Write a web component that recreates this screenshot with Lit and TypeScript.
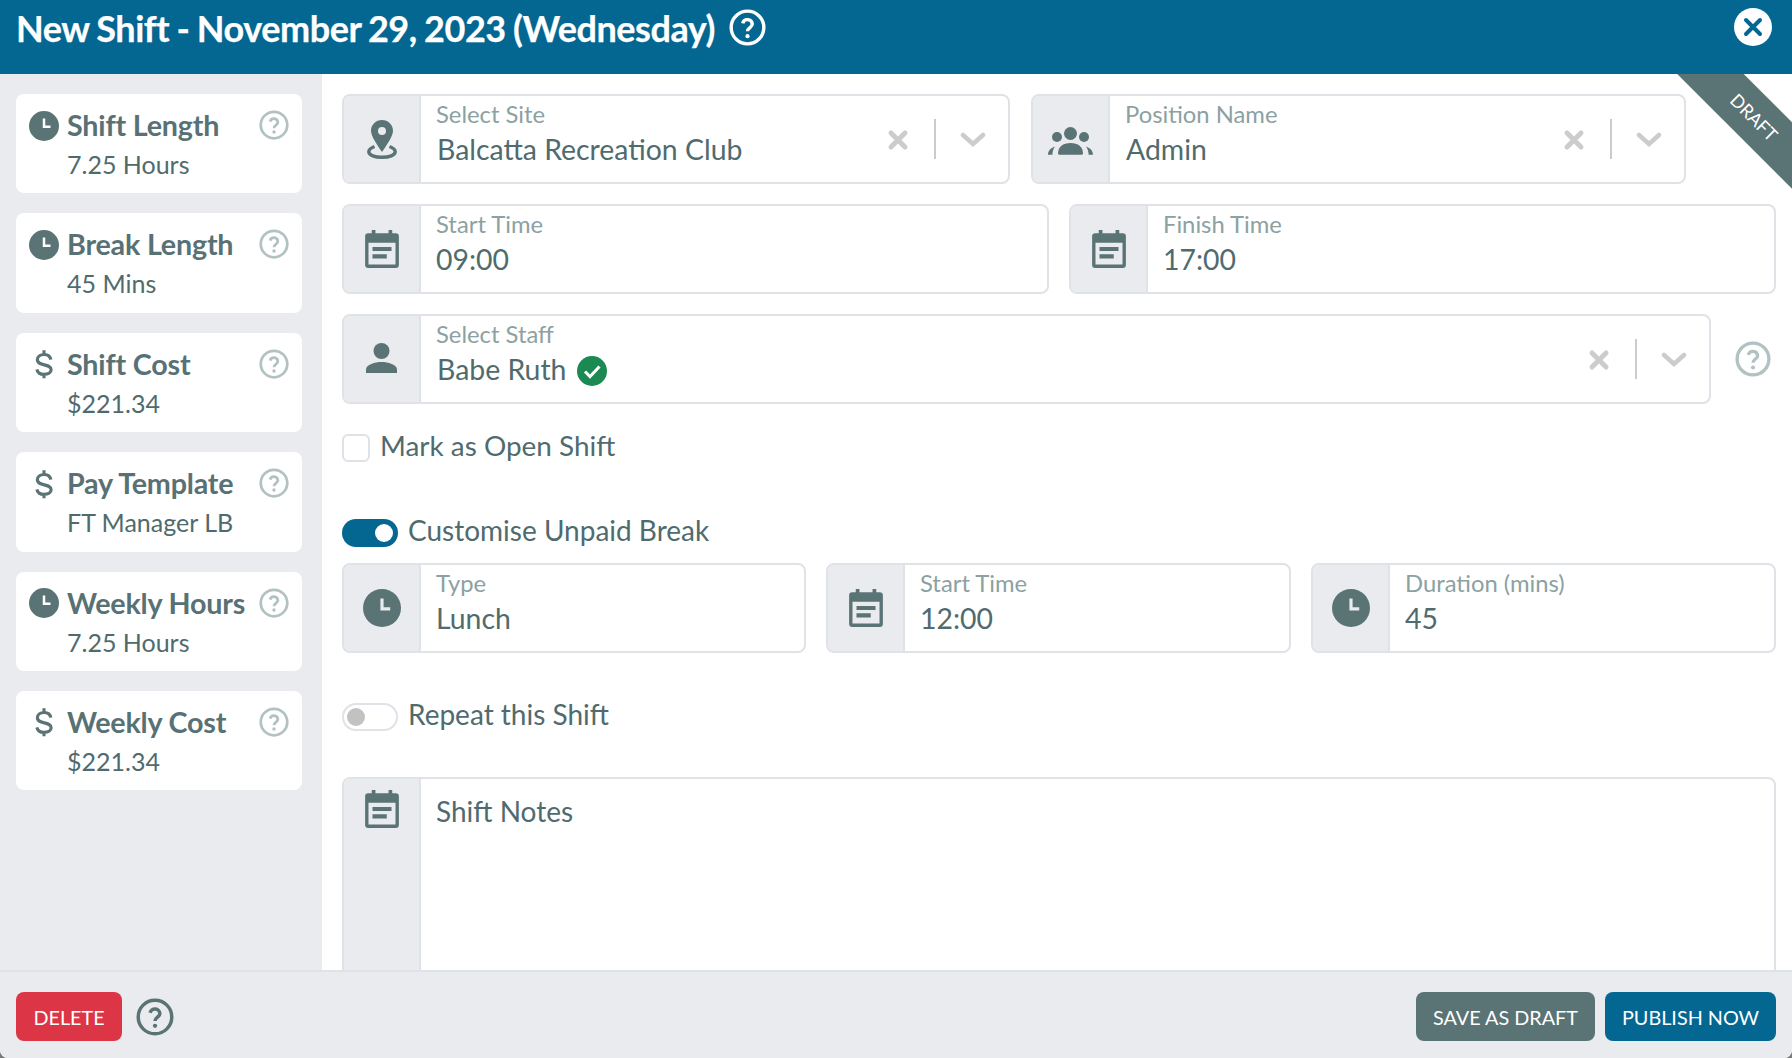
import { LitElement, html, css, svg } from "lit";
import { customElement } from "lit/decorators.js";

const help = svg`<circle cx="12" cy="12" r="10.6" fill="none" stroke="currentColor" stroke-width="2.2"/><path d="M8.900 9.300a3.150 3.150 0 0 1 6.200.5c0 2.200-3.100 2.300-3.100 4.700" fill="none" stroke="currentColor" stroke-width="2.200"/><circle cx="12" cy="17.600" r="1.350" fill="currentColor"/>`;
const clock = svg`<circle cx="12" cy="12" r="12" fill="currentColor"/><path d="M12 6v6.600h5.200" fill="none" stroke="#fff" stroke-width="2"/>`;
const clockAddon = svg`<circle cx="12" cy="12" r="12" fill="currentColor"/><path d="M12 6v6.600h5.200" fill="none" stroke="#e9ebef" stroke-width="2"/>`;
const dollar = svg`<path d="M17.400 8.500C17 5.800 14.900 4.400 12 4.400 9 4.400 6.700 6 6.700 8.600c0 5.600 11 2.600 11 8 0 2.300-2.400 3.700-5.700 3.700-3 0-5.200-1.400-5.700-4M12 1v3.400M12 20v3.400" fill="none" stroke="currentColor" stroke-width="2.500"/>`;
const calendar = svg`<path fill-rule="evenodd" fill="currentColor" d="M6.300 0h3.500v3h12.400V0h3.500v3H29a3 3 0 0 1 3 3v27a3 3 0 0 1-3 3H3a3 3 0 0 1-3-3V6a3 3 0 0 1 3-3h3.300zM3.200 12V32.700h25.600V12z"/><path fill="currentColor" d="M7 16h18v4H7zM7 23h13.500v4H7z"/>`;
const pin = svg`<path fill-rule="evenodd" fill="currentColor" d="M15 0c6.200 0 11 4.800 11 10.800 0 5.600-6.500 14.600-11 21.200C10.500 25.400 4 16.400 4 10.800 4 4.800 8.800 0 15 0zm0 7a4 4 0 1 0 0 8 4 4 0 0 0 0-8z"/><path fill="none" stroke="currentColor" stroke-width="3.400" d="M7.500 26.500C3.500 28 1.800 29.500 1.800 31.800c0 3.400 6 5.500 13.200 5.500s13.200-2.100 13.200-5.500c0-2.300-1.700-3.800-5.700-5.300"/>`;
const users = svg`<g fill="currentColor"><circle cx="22.500" cy="6.500" r="6.500"/><circle cx="9" cy="10" r="5"/><circle cx="36" cy="10" r="5"/><path d="M10 26.500c0-6.500 5-10.500 12.500-10.500S35 20 35 26.500c0 .7-.4 1.200-1.200 1.200H11.200c-.8 0-1.200-.5-1.200-1.200z"/><path d="M0 27.700c0-3.600 2.500-6.700 7-8.200-1.600 2.200-2.600 5-2.600 8.200zM45 27.700c0-3.600-2.500-6.700-7-8.200 1.600 2.200 2.600 5 2.600 8.200z"/></g>`;
const person = svg`<g fill="currentColor"><circle cx="15.500" cy="8" r="8"/><path d="M0 30v-3.500C0 21.500 9 19 15.500 19S31 21.500 31 26.500V30z"/></g>`;

function ic(cls: string, vb: string, body: unknown) {
  return html`<svg class=${cls} viewBox=${vb} aria-hidden="true">${body}</svg>`;
}

@customElement("app-root")
export class AppRoot extends LitElement {
  static styles = css`
    :host {
      display: block;
      width: 1792px;
      height: 1058px;
      background: #7a7a7a;
      font-family: Lato, "Liberation Sans", sans-serif;
      color: #506b6e;
    }
    * { box-sizing: border-box; }
    .modal {
      height: 1058px;
      display: flex;
      flex-direction: column;
      background: #fff;
      border-radius: 0 0 8px 8px;
      overflow: hidden;
    }
    .head {
      height: 74px;
      flex: none;
      background: #036792;
      color: #fff;
      display: flex;
      align-items: flex-start;
      padding: 7px 20px 0 16px;
    }
    .head h1 {
      margin: 0;
      font-size: 36px;
      line-height: 42px;
      font-weight: 700;
      letter-spacing: -0.45px;
      word-spacing: -1px;
      -webkit-text-stroke: 0.25px #fff;
      white-space: nowrap;
    }
    .head .hq { width: 37px; height: 37px; margin: 2px 0 0 14px; color: #fff; }
    .close {
      margin-left: auto;
      margin-top: 1px;
      width: 38px;
      height: 38px;
    }
    .body { flex: 1; min-height: 0; display: flex; }
    .side {
      width: 322px;
      flex: none;
      background: #e9ebef;
      padding: 20px 20px 0 16px;
      display: flex;
      flex-direction: column;
      gap: 20px;
    }
    .card {
      height: 99.400px;
      background: #fff;
      border-radius: 8px;
      display: grid;
      grid-template-columns: 38px 1fr 30px;
      grid-template-rows: 39px auto;
      padding: 12px 13px 0 13px;
    }
    .card .ci { width: 30px; height: 30px; align-self: center; color: #5a7374; }
    .card .ci.d { height: 32px; width: 30px; }
    .card b { font-size: 28.700px; font-weight: 700; line-height: 39px; letter-spacing: -0.2px; white-space: nowrap; color: #587175; }
    .card .q { width: 30px; height: 30px; color: #b2c1c1; align-self: center; margin-top: -1px; }
    .card span { grid-column: 2 / 4; font-size: 25px; line-height: 38px; white-space: nowrap; }
    .main {
      flex: 1;
      min-width: 0;
      position: relative;
      overflow: hidden;
      padding: 20px 16px 0 20px;
    }
    .row { display: grid; gap: 20px; margin-bottom: 20px; }
    .r1 { grid-template-columns: 668px 655px; column-gap: 21px; }
    .r2 { grid-template-columns: 707px 707px; column-gap: 20px; }
    .r3 { grid-template-columns: 1369px 65px; gap: 0; margin-bottom: 30px; }
    .r4 { grid-template-columns: 464px 465px 465px; margin-bottom: 50px; }
    .field {
      height: 90px;
      border: 2px solid #dfe2e6;
      border-radius: 8px;
      display: flex;
      overflow: hidden;
      background: #fff;
    }
    .addon {
      width: 77px;
      flex: none;
      background: #e9ebef;
      border-right: 2px solid #dfe2e6;
      display: flex;
      align-items: center;
      justify-content: center;
      color: #5a7374;
    }
    .addon .cal { width: 34px; height: 38px; margin-top: -1px; }
    .addon .pin { width: 30px; height: 39px; }
    .addon .users { width: 45px; height: 28px; margin-top: 4px; }
    .addon .person { width: 31px; height: 30px; margin-top: -2px; }
    .addon .clk { width: 38px; height: 38px; }
    .txt { flex: 1; min-width: 0; padding: 2px 0 0 15px; }
    .lab { font-size: 23.800px; line-height: 32px; color: #8ca1a2; white-space: nowrap; }
    .val { font-size: 28.400px; line-height: 38px; white-space: nowrap; display: flex; align-items: center; }
    .val.sel { margin-left: 1px; }
    .val .ok { width: 30px; height: 30px; margin-left: 11px; margin-top: 3px; }
    .ctl { flex: none; display: flex; align-items: center; color: #ccc; padding: 2px 22px 0 0; }
    .ctl .x { width: 22px; height: 22px; margin-right: 25px; }
    .ctl i { display: block; width: 2px; height: 40px; background: #ccc; margin-right: 24px; margin-top: -2px; }
    .ctl .ch { width: 26px; height: 16px; }
    .sq { width: 36px; height: 36px; color: #b2c1c1; align-self: center; justify-self: end; margin-right: 5px; }
    .check { display: flex; align-items: center; height: 28px; margin-bottom: 57px; font-size: 27.900px; white-space: nowrap; }
    .label { display: block; position: relative; top: -3px; }
    .box { width: 28px; height: 28px; border: 2px solid #dfe2e6; border-radius: 6px; margin-right: 10px; background: #fff; }
    .tg { display: flex; align-items: center; height: 28px; font-size: 28px; white-space: nowrap; }
    .tg.on { margin-bottom: 16px; }
    .tg.off { margin-bottom: 46px; }
    .sw { width: 56px; height: 28px; border-radius: 14px; margin-right: 10px; display: flex; align-items: center; flex: none; }
    .on .sw { background: #036792; justify-content: flex-end; padding-right: 5px; }
    .on .sw u { display: block; width: 18px; height: 18px; border-radius: 50%; background: #fff; }
    .off .sw { background: #fff; border: 2px solid #dfe2e6; padding-left: 3px; }
    .off .sw u { display: block; width: 18px; height: 18px; border-radius: 50%; background: #c2c2c2; }
    .notes { height: 260px; align-items: stretch; }
    .notes .addon { align-items: flex-start; padding-top: 12px; }
    .notes .txt { padding-top: 13px; font-size: 28px; line-height: 38px; }
    .ribbon {
      position: absolute;
      top: 19.700px;
      right: -92px;
      width: 260px;
      height: 46.700px;
      background: #5a7374;
      color: #fff;
      transform: rotate(45deg);
      display: flex;
      align-items: center;
      justify-content: center;
      font-size: 18px;
      text-transform: uppercase;
    }
    .foot {
      height: 88px;
      flex: none;
      background: #e9ebef;
      border-top: 2px solid #dfe2e6;
      display: flex;
      align-items: center;
      padding: 3px 16px 0;
    }
    .btn {
      height: 49px;
      border: 0;
      border-radius: 8px;
      color: #fff;
      font-family: inherit;
      font-size: 19.800px;
      padding: 0;
      text-transform: uppercase;
      display: flex;
      align-items: center;
      justify-content: center;
    }
    .del { width: 106px; background: #dc3545; }
    .draft { width: 179px; background: #5a7374; margin-left: auto; margin-right: 10px; }
    .pub { width: 171px; background: #036792; }
    .fq { width: 38px; height: 38px; color: #5a7374; margin-left: 14px; }
  `;

  private card(title: string, sub: string, kind: "clock" | "dollar") {
    return html`<div class="card">
      ${kind === "clock"
        ? ic("ci", "0 0 24 24", clock)
        : ic("ci d", "0 0 24 24", dollar)}
      <b>${title}</b>
      ${ic("q", "0 0 24 24", help)}
      <span>${sub}</span>
    </div>`;
  }

  private field(icon: unknown, label: string, value: unknown, select = false) {
    return html`<div class="field">
      <div class="addon">${icon}</div>
      <div class="txt">
        <div class="lab">${label}</div>
        <div class=${select ? "val sel" : "val"}>${value}</div>
      </div>
      ${select
        ? html`<div class="ctl">
            <svg class="x" viewBox="0 0 22 22"><path d="M4 4l14 14M18 4L4 18" stroke="currentColor" stroke-width="5" stroke-linecap="round"/></svg>
            <i></i>
            <svg class="ch" viewBox="0 0 26 16"><path d="M3 3l10 9 10-9" fill="none" stroke="currentColor" stroke-width="4.500" stroke-linecap="round"/></svg>
          </div>`
        : ""}
    </div>`;
  }

  render() {
    const cal = ic("cal", "0 0 32 36", calendar);
    const clk = ic("clk", "0 0 24 24", clockAddon);
    return html`<div class="modal">
      <header class="head">
        <h1>New Shift - November 29, 2023 (Wednesday)</h1>
        ${ic("hq", "0 0 24 24", help)}
        <svg class="close" viewBox="0 0 38 38"><circle cx="19" cy="19" r="19" fill="#fff"/><path d="M12 12l14 14M26 12L12 26" stroke="#036792" stroke-width="4" stroke-linecap="round"/></svg>
      </header>
      <div class="body">
        <aside class="side">
          ${this.card("Shift Length", "7.25 Hours", "clock")}
          ${this.card("Break Length", "45 Mins", "clock")}
          ${this.card("Shift Cost", "$221.34", "dollar")}
          ${this.card("Pay Template", "FT Manager LB", "dollar")}
          ${this.card("Weekly Hours", "7.25 Hours", "clock")}
          ${this.card("Weekly Cost", "$221.34", "dollar")}
        </aside>
        <main class="main">
          <div class="row r1">
            ${this.field(ic("pin", "0 0 30 39", pin), "Select Site", "Balcatta Recreation Club", true)}
            ${this.field(ic("users", "0 0 45 28", users), "Position Name", "Admin", true)}
          </div>
          <div class="row r2">
            ${this.field(cal, "Start Time", "09:00")}
            ${this.field(cal, "Finish Time", "17:00")}
          </div>
          <div class="row r3">
            ${this.field(
              ic("person", "0 0 31 30", person),
              "Select Staff",
              html`Babe Ruth<svg class="ok" viewBox="0 0 30 30"><circle cx="15" cy="15" r="15" fill="#1a8a52"/><path d="M8 15.500l5 5 9.500-10" fill="none" stroke="#fff" stroke-width="3"/></svg>`,
              true
            )}
            ${ic("sq", "0 0 24 24", help)}
          </div>
          <div class="check"><div class="box"></div><span class="label">Mark as Open Shift</span></div>
          <div class="tg on"><div class="sw"><u></u></div><span class="label">Customise Unpaid Break</span></div>
          <div class="row r4">
            ${this.field(clk, "Type", "Lunch")}
            ${this.field(cal, "Start Time", "12:00")}
            ${this.field(clk, "Duration (mins)", "45")}
          </div>
          <div class="tg off"><div class="sw"><u></u></div><span class="label">Repeat this Shift</span></div>
          <div class="field notes">
            <div class="addon">${cal}</div>
            <div class="txt">Shift Notes</div>
          </div>
          <div class="ribbon">Draft</div>
        </main>
      </div>
      <footer class="foot">
        <button class="btn del">Delete</button>
        ${ic("fq", "0 0 24 24", help)}
        <button class="btn draft">Save as Draft</button>
        <button class="btn pub">Publish Now</button>
      </footer>
    </div>`;
  }
}
